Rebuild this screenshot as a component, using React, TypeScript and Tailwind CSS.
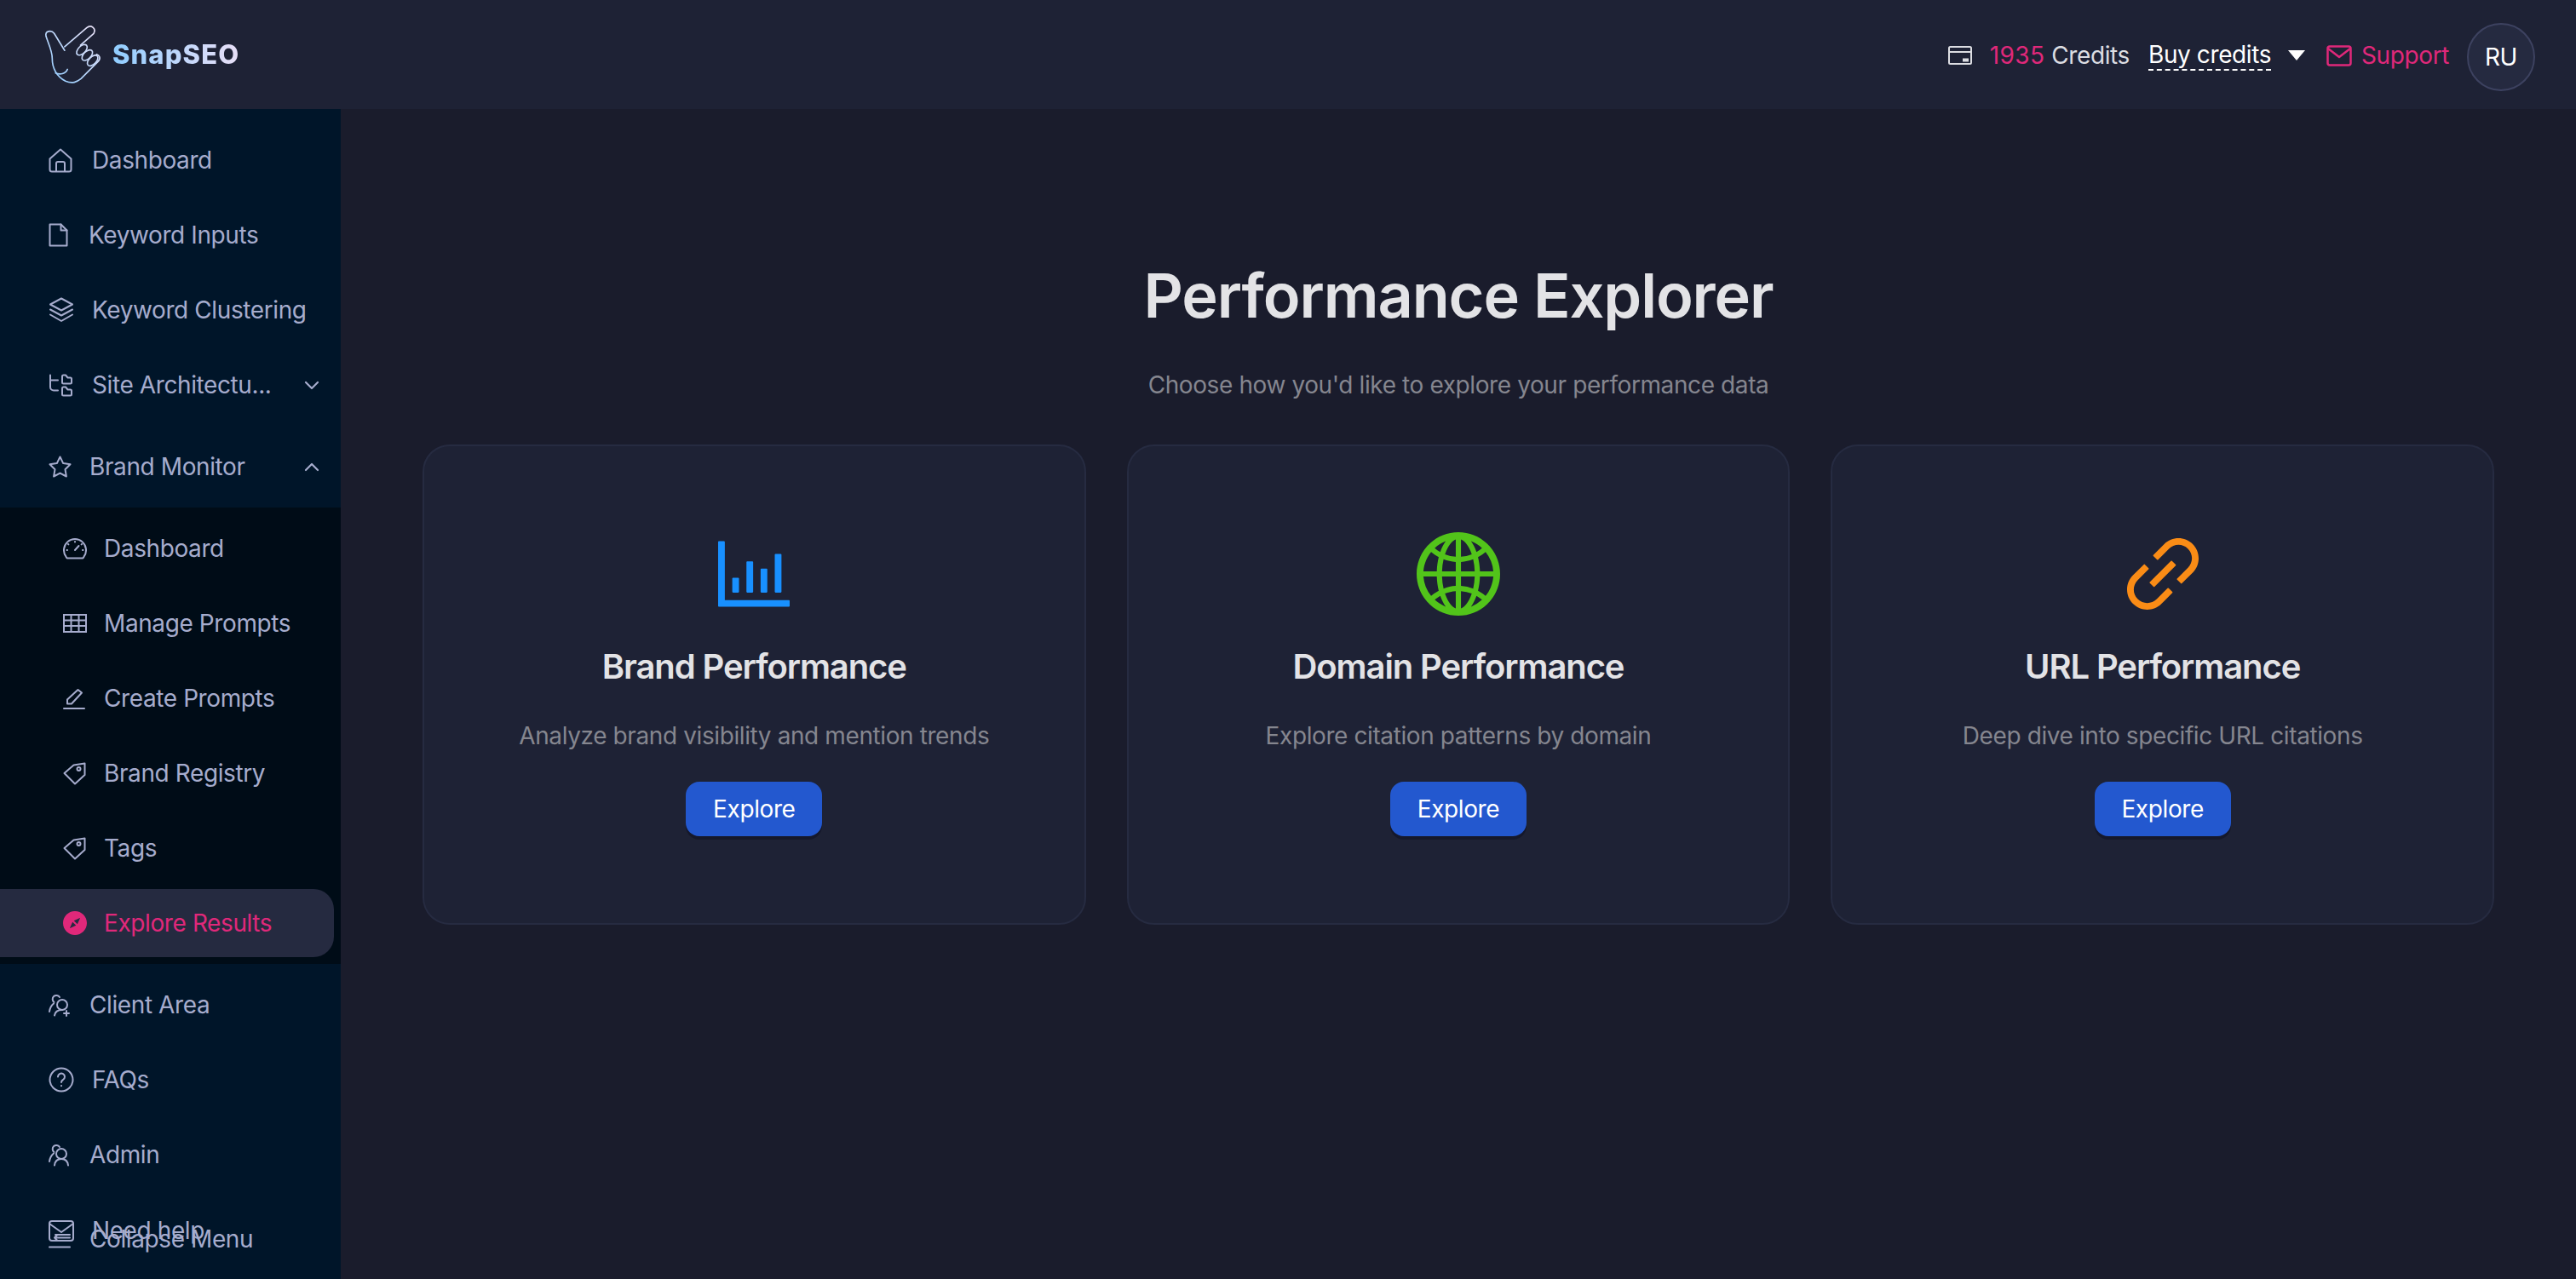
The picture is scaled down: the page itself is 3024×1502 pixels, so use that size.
import React from "react";
import {
  AiOutlineBarChart,
  AiOutlineGlobal,
  AiOutlineLink,
  AiFillCompass,
} from "react-icons/ai";

type SvgProps = { children: React.ReactNode; w: number; h: number; box: string };

function Line({ children, w, h, box }: SvgProps) {
  return (
    <svg
      width={w}
      height={h}
      viewBox={box}
      fill="none"
      stroke="currentColor"
      strokeWidth="2"
      strokeLinecap="round"
      strokeLinejoin="round"
    >
      {children}
    </svg>
  );
}

const HomeIcon = () => (
  <Line w={28} h={29} box="0 0 28 29">
    <path d="M1.5 12.5 14 1.5l12.5 11V25a2.500 2.500 0 0 1-2.500 2.500H4A2.500 2.500 0 0 1 1.500 25Z" />
    <path d="M9 27v-9a2 2 0 0 1 2-2h6a2 2 0 0 1 2 2v9" />
  </Line>
);
const FileIcon = () => (
  <Line w={23} h={28} box="0 0 23 28">
    <path d="M1.500 1.500h13l7 7v18h-20Z" />
    <path d="M14.500 1.500v7h7" />
  </Line>
);
const StackIcon = () => (
  <Line w={30} h={30} box="0 0 30 30">
    <path d="M15 1.500 28 8.500 15 15.500 2 8.500Z" />
    <path d="m2 14.500 13 7 13-7" />
    <path d="m2 20.500 13 7.500 13-7.500" />
  </Line>
);
const TreeIcon = () => (
  <Line w={28} h={27} box="0 0 28 27">
    <path d="M2 1.500v14a4 4 0 0 0 4 4h5" />
    <path d="M2 7.500h9" />
    <path d="M16 3a1.500 1.500 0 0 1 1.500-1.500H20l2.500 3h3A1.500 1.500 0 0 1 27 6v4a1.500 1.500 0 0 1-1.500 1.500h-8A1.500 1.500 0 0 1 16 10Z" />
    <path d="M16 17a1.500 1.500 0 0 1 1.500-1.500H20l2.500 3h3A1.500 1.500 0 0 1 27 20v4a1.500 1.500 0 0 1-1.500 1.500h-8A1.500 1.500 0 0 1 16 24Z" />
  </Line>
);
const StarIcon = () => (
  <Line w={27} h={26} box="0 0 27 26">
    <path d="m13.500 1.500 3.700 7.600 8.300 1.200-6 5.900 1.400 8.300-7.400-3.900-7.400 3.900 1.400-8.300-6-5.900 8.300-1.200Z" />
  </Line>
);
const GaugeIcon = () => (
  <Line w={28} h={26} box="0 0 28 26">
    <path d="M5 24.500h18a3 3 0 0 0 1.500-1.800A13 13 0 1 0 3.500 22.700 3 3 0 0 0 5 24.500Z" />
    <path d="m14 15 4.500-5" />
    <path d="M14 5v.500M6 8l.400.400M22 8l-.400.400M4.500 15H5M23 15h.500" />
  </Line>
);
const TableIcon = () => (
  <Line w={28} h={22} box="0 0 28 22">
    <path d="M1 1h26v20H1ZM1 7.500h26M1 14h26M9.500 1v20M18.500 1v20" strokeLinecap="butt" strokeLinejoin="miter" />
  </Line>
);
const PenIcon = () => (
  <Line w={26} h={25} box="0 0 26 25">
    <path d="M1 24h24" />
    <path d="M5 18.500v-5L17.500 2l4.500 3.500L10 18.500Z" />
  </Line>
);
const TagIcon = () => (
  <Line w={27} h={27} box="0 0 27 27">
    <path d="M1.500 13 12.500 3.500 25.500 1.500 25.500 15 14 25.500Z" />
    <circle cx="18.500" cy="8" r="2" />
  </Line>
);
const ClientIcon = () => (
  <Line w={25} h={27} box="0 0 25 27">
    <path d="M1 21c.500-4 2-7 5-9.500" />
    <path d="M6.500 10a4.500 4.500 0 1 1 6.500-6" />
    <circle cx="16" cy="13" r="6" />
    <path d="M7 25.500c.500-3.500 3-6.500 9-6.500" />
    <path d="M21 20v6M18 23h6" />
  </Line>
);
const QuestionIcon = () => (
  <Line w={30} h={30} box="0 0 30 30">
    <circle cx="15" cy="15" r="13.500" />
    <path d="M11 11.500a4 4 0 1 1 6 3.500c-1.300.700-2 1.500-2 3" />
    <path d="M15 22v.200" />
  </Line>
);
const AdminIcon = () => (
  <Line w={25} h={27} box="0 0 25 27">
    <path d="M1 21c.500-4 2-7 5-9.500" />
    <path d="M6.500 10a4.500 4.500 0 1 1 6.500-6" />
    <circle cx="15" cy="12" r="6" />
    <path d="M7 25.500c.500-4.500 3.500-7.500 8-7.500s7.500 3 8 7.500" />
  </Line>
);
const HelpIcon = () => (
  <Line w={30} h={25} box="0 0 30 25">
    <rect x="1" y="1" width="28" height="23" rx="3" />
    <path d="m1 4 14 10L29 4" />
  </Line>
);
const CollapseIcon = () => (
  <Line w={26} h={22} box="0 0 26 22">
    <path d="M1 20.500h24" />
    <path d="M8 6h17M8 13h17" />
    <path d="M7 9.500H25M7 9.500l3-3M7 9.500l3 3" />
  </Line>
);
const Chevron = ({ up }: { up?: boolean }) => (
  <Line w={18} h={11} box="0 0 18 11">
    <path d={up ? "M2 9l7-7 7 7" : "M2 2l7 7 7-7"} strokeWidth="2.200" />
  </Line>
);

const Logo = () => (
  <svg width="68" height="72" viewBox="150 85 205 215" fill="none" stroke="url(#snap)" strokeWidth="5" strokeLinecap="round" strokeLinejoin="round">
    <defs>
      <linearGradient id="snap" gradientUnits="userSpaceOnUse" x1="155" y1="290" x2="345" y2="95">
        <stop offset="0" stopColor="#8ecbff" />
        <stop offset="1" stopColor="#ece2f6" />
      </linearGradient>
    </defs>
    <path d="M222 178 185 118C175 105 152 108 156 128 165 155 178 180 178 205 178 240 195 270 225 287 250 297 265 290 280 278L340 218C352 205 345 195 335 192" />
    <path d="M222 165 300 98C315 85 335 100 325 118L278 160" />
    <ellipse cx="283" cy="176" rx="23" ry="13" transform="rotate(-45 283 176)" />
    <ellipse cx="302" cy="195" rx="23" ry="13" transform="rotate(-45 302 195)" />
    <ellipse cx="321" cy="214" rx="23" ry="13" transform="rotate(-45 321 214)" />
    <path d="M232 245C225 262 205 265 190 258" />
  </svg>
);

function NavItem({
  icon,
  label,
  offset,
  chevron,
}: {
  icon: React.ReactNode;
  label: string;
  offset: string;
  chevron?: "up" | "down";
}) {
  return (
    <div className="flex h-[80px] items-center pl-[57px] pr-[25px]">
      <span className={`flex shrink-0 items-center ${offset}`}>{icon}</span>
      <span className="min-w-0 flex-1 truncate">{label}</span>
      {chevron && (
        <span className="ml-[34px] flex shrink-0">
          <Chevron up={chevron === "up"} />
        </span>
      )}
    </div>
  );
}

function SubItem({
  icon,
  label,
  active,
}: {
  icon: React.ReactNode;
  label: string;
  active?: boolean;
}) {
  return (
    <div
      className={`mr-[8px] flex h-[80px] items-center rounded-r-[24px] pl-[74px] ${
        active ? "bg-[#252a40] text-[#e0287a]" : ""
      }`}
    >
      <span className="flex w-[48px] shrink-0 items-center">{icon}</span>
      <span>{label}</span>
    </div>
  );
}

function Card({
  icon,
  title,
  text,
}: {
  icon: React.ReactNode;
  title: string;
  text: string;
}) {
  return (
    <div className="flex h-[564px] flex-col items-center rounded-[32px] border-2 border-[#262b41] bg-[#1e2235] pt-[94px]">
      <div className="flex h-[112px] items-center">{icon}</div>
      <h2 className="mt-[25px] text-[40px] leading-[56px] font-semibold tracking-[-1.1px] text-[#e3e3e6]">{title}</h2>
      <p className="mt-[31px] text-[28px] leading-[44px] text-[#85868f]">{text}</p>
      <button className="mt-[32px] h-[64px] w-[160px] rounded-[16px] bg-[#2358cf] text-[28px] text-white shadow-[0_4px_0_rgba(10,14,30,0.45)]">
        Explore
      </button>
    </div>
  );
}

export default function App() {
  return (
    <div className="flex h-[1502px] w-full flex-col overflow-hidden bg-[#1a1c2c] font-[Inter,sans-serif] text-[28px] tracking-[-0.4px]">
      <header className="flex h-[128px] shrink-0 items-center justify-between bg-[#1e2235] pl-[52px] pr-[48px]">
        <div className="flex items-center gap-[12px]">
          <Logo />
          <span className="bg-linear-to-r from-[#8fcdff] to-[#e8dff7] bg-clip-text text-[31px] font-extrabold tracking-[1.1px] text-transparent">
            SnapSEO
          </span>
        </div>
        <div className="mt-[6px] flex items-center">
          <svg className="-mt-[4px]" width="28" height="22" viewBox="0 0 28 22" fill="none" stroke="#dcdde2" strokeWidth="2">
            <rect x="1" y="1" width="26" height="20" rx="1.500" />
            <path d="M1 7h26" />
            <path d="M18 15.500h5v2h-5z" fill="#dcdde2" />
          </svg>
          <span className="ml-[21px] -mt-[4px] tracking-[0.4px] text-[#e0287a]">1935</span>
          <span className="ml-[8px] -mt-[4px] text-[#dcdde2]">Credits</span>
          <span className="ml-[22px] -mt-[4px] border-b-2 border-dashed border-white leading-[34px] text-white">Buy credits</span>
          <svg className="ml-[20px] -mt-[4px]" width="20" height="12" viewBox="0 0 20 12" fill="#fff">
            <path d="M0 0h20L10 12Z" />
          </svg>
          <svg className="ml-[25px] -mt-[4px]" width="30" height="25" viewBox="0 0 30 25" fill="none" stroke="#e0287a" strokeWidth="2.500" strokeLinejoin="round">
            <rect x="1.500" y="1.500" width="27" height="22" rx="2.500" />
            <path d="m2 4 13 10L28 4" />
          </svg>
          <span className="ml-[11px] -mt-[4px] text-[#e0287a]">Support</span>
          <div className="ml-[21px] flex h-[80px] w-[80px] items-center justify-center rounded-full border-2 border-[#3d4260] bg-[#252a40] text-white">
            RU
          </div>
        </div>
      </header>

      <div className="flex min-h-0 flex-1">
        <aside className="relative w-[400px] shrink-0 bg-[#001529] pt-[20px] text-[#a6accd]">
          <div className="flex flex-col gap-[8px]">
            <NavItem icon={<HomeIcon />} label="Dashboard" offset="w-[51px]" />
            <NavItem icon={<FileIcon />} label="Keyword Inputs" offset="w-[47px]" />
            <NavItem icon={<StackIcon />} label="Keyword Clustering" offset="w-[51px]" />
            <NavItem icon={<TreeIcon />} label="Site Architectu..." offset="w-[51px]" chevron="down" />
          </div>
          <div className="mt-[16px]">
            <NavItem icon={<StarIcon />} label="Brand Monitor" offset="w-[48px]" chevron="up" />
          </div>
          <div className="mt-[8px] flex flex-col gap-[8px] bg-[#000c17] py-[8px]">
            <SubItem icon={<GaugeIcon />} label="Dashboard" />
            <SubItem icon={<TableIcon />} label="Manage Prompts" />
            <SubItem icon={<PenIcon />} label="Create Prompts" />
            <SubItem icon={<TagIcon />} label="Brand Registry" />
            <SubItem icon={<TagIcon />} label="Tags" />
            <SubItem
              icon={<AiFillCompass size={32} className="-ml-[2px]" />}
              label="Explore Results"
              active
            />
          </div>
          <div className="mt-[8px] flex flex-col gap-[8px]">
            <NavItem icon={<ClientIcon />} label="Client Area" offset="w-[48px]" />
            <NavItem icon={<QuestionIcon />} label="FAQs" offset="w-[51px]" />
            <NavItem icon={<AdminIcon />} label="Admin" offset="w-[48px]" />
          </div>
          {/* these two really do sit on top of each other in the app */}
          <div className="absolute left-0 top-[1277px] w-full">
            <NavItem icon={<HelpIcon />} label="Need help" offset="w-[51px]" />
          </div>
          <div className="absolute left-0 top-[1287px] w-full">
            <NavItem icon={<CollapseIcon />} label="Collapse Menu" offset="w-[48px]" />
          </div>
        </aside>

        <main className="min-w-0 flex-1 px-[96px] pt-[175px]">
          <h1 className="text-center text-[72px] leading-[88px] font-semibold tracking-[-1.1px] text-[#e3e3e6]">
            Performance Explorer
          </h1>
          <p className="mt-[39px] text-center text-[28px] leading-[44px] text-[#85868f]">
            Choose how you'd like to explore your performance data
          </p>
          <div className="mt-[48px] grid grid-cols-3 gap-[48px]">
            <Card
              icon={<AiOutlineBarChart size={112} color="#1890ff" />}
              title="Brand Performance"
              text="Analyze brand visibility and mention trends"
            />
            <Card
              icon={<AiOutlineGlobal size={112} color="#52c41a" />}
              title="Domain Performance"
              text="Explore citation patterns by domain"
            />
            <Card
              icon={<AiOutlineLink size={112} color="#fa8c16" />}
              title="URL Performance"
              text="Deep dive into specific URL citations"
            />
          </div>
        </main>
      </div>
    </div>
  );
}
